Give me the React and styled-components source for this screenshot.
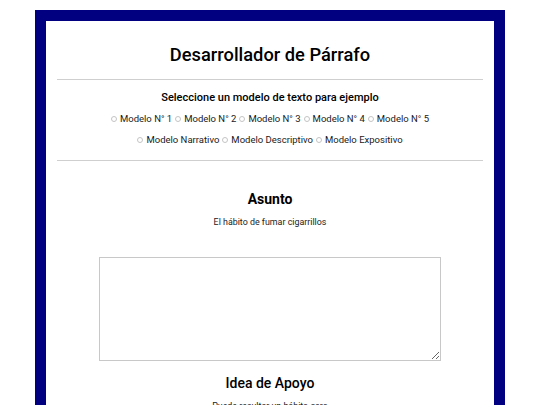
import React from 'react';
import styled, { createGlobalStyle } from 'styled-components';

const GlobalStyle = createGlobalStyle`
  body {
    margin: 0;
    background: #ffffff;
    font-family: Roboto, "Liberation Sans", sans-serif;
    color: #111;
  }
`;

const modelos = [
  ['Modelo N° 1', 'Modelo N° 2', 'Modelo N° 3', 'Modelo N° 4', 'Modelo N° 5'],
  ['Modelo Narrativo', 'Modelo Descriptivo', 'Modelo Expositivo'],
];

function App() {
  return (
    <>
      <GlobalStyle />
      <Frame>
        <Title>Desarrollador de Párrafo</Title>
        <Rule $top={12} />
        <Subtitle>Seleccione un modelo de texto para ejemplo</Subtitle>
        {modelos.map((row, i) => (
          <RadioRow key={i}>
            {row.map((m) => (
              <RadioLabel key={m}>
                <Radio type="radio" name="modelo" />
                {m}
              </RadioLabel>
            ))}
          </RadioRow>
        ))}
        <Rule $top={13} />
        <Section>
          <SectionTitle>Asunto</SectionTitle>
          <SectionText>El hábito de fumar cigarrillos</SectionText>
          <Area />
        </Section>
        <Section>
          <SectionTitle $big>Idea de Apoyo</SectionTitle>
          <SectionText $top={7}>Puede resultar un hábito caro</SectionText>
        </Section>
      </Frame>
    </>
  );
}

export default App;

const Frame = styled.div`
  margin: 10px 35px;
  border: 11px solid #000080;
  padding: 0 11px 40px;
  display: flex;
  flex-direction: column;
  align-items: stretch;
`;

const Title = styled.h1`
  margin: 22px 0 0;
  font-size: 18.3px;
  font-weight: 500;
  line-height: 24px;
  text-align: center;
  color: #000;
`;

const Rule = styled.hr`
  margin: ${(p) => p.$top}px 0 0;
  border: 0;
  border-top: 1px solid #cfcfcf;
  height: 0;
  width: 100%;
`;

const Subtitle = styled.h3`
  margin: 11px 0 0;
  font-size: 11px;
  font-weight: 500;
  line-height: 14px;
  text-align: center;
  color: #000;
`;

const RadioRow = styled.div`
  display: flex;
  justify-content: center;
  flex-wrap: wrap;
  gap: 3px;
  margin-top: 7px;
  font-size: 9.5px;
  line-height: 14px;
`;

const RadioLabel = styled.label`
  display: inline-flex;
  align-items: center;
  gap: 2px;
  color: #1a1a1a;
`;

const Radio = styled.input`
  appearance: none;
  margin: 0 1px 0 0;
  width: 6px;
  height: 6px;
  border: 1px solid #c4c4c4;
  border-radius: 50%;
  background: #fff;
`;

const Section = styled.div`
  display: flex;
  flex-direction: column;
  align-items: center;
`;

const SectionTitle = styled.h2`
  margin: ${(p) => (p.$big ? '12px' : '28px')} 0 0;
  font-size: ${(p) => (p.$big ? '14px' : '14px')};
  font-weight: ${(p) => (p.$big ? 500 : 700)};
  line-height: 20px;
  color: #000;
`;

const SectionText = styled.p`
  margin: ${(p) => (p.$top ? p.$top : 7)}px 0 0;
  font-size: 8.9px;
  line-height: 12px;
  color: #222;
`;

const Area = styled.textarea`
  margin-top: 29px;
  width: 342px;
  height: 104px;
  box-sizing: border-box;
  border: 1px solid #c8c8c8;
  resize: vertical;
`;
